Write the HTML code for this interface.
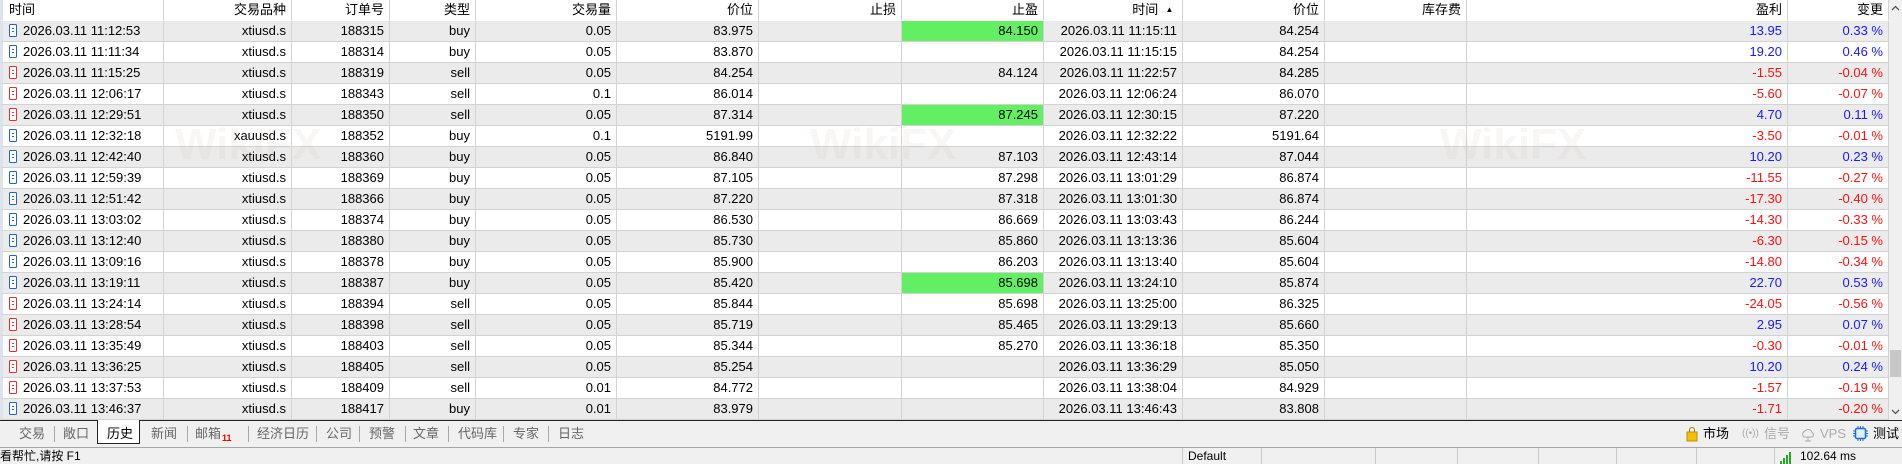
<!DOCTYPE html>
<html><head><meta charset="utf-8">
<style>
*{margin:0;padding:0;box-sizing:border-box}
body{width:1902px;height:464px;overflow:hidden;background:#f0f0f0;font-family:"Liberation Sans","Noto Sans CJK SC",sans-serif;font-size:13px;color:#000;position:relative}
#wrap{position:absolute;left:0;top:0;width:1889px;height:420px;background:#fff;overflow:hidden}
table{border-collapse:separate;border-spacing:0;table-layout:fixed;width:1889px}
td,th{height:20px;line-height:20px;padding:0 5px 0 4px;text-align:right;white-space:nowrap;overflow:hidden;border-right:1px solid #d3d3d3;border-bottom:1px solid #d3d3d3;font-weight:normal}
th{background:#fff;height:20px;border-bottom:1px solid #fff}
th:first-child,td:first-child{text-align:left;padding-left:6px;border-left:3px solid #dde3ea}
tr.g td{background:#ebebeb}
td.gr{background:#62ef62 !important}
.b{color:#1818ff}.r{color:#ff1010}
.ic{display:inline-block;width:8px;height:13px;border:1.3px solid #2266bb;border-radius:1.5px;vertical-align:-2px;margin-right:6px;position:relative;background:#fff}
.ic:before{content:"";position:absolute;left:2px;top:2.5px;width:2px;height:1.3px;background:#2266bb;box-shadow:0 3px 0 #2266bb}
.ic.s{border-color:#e03030}.ic.s:before{background:#e03030;box-shadow:0 3px 0 #e03030}
#sb{position:absolute;left:1889px;top:0;width:13px;height:420px;background:#f0f0f0}
#tabs{position:absolute;left:0;top:420px;width:1902px;height:28px;border-top:1.5px solid #222;border-bottom:1px solid #a5a5a5;background:#f0f0f0}
.t{position:absolute;top:5px;font-size:13px;color:#666;line-height:16px}
.sep{position:absolute;top:5px;width:1px;height:16px;background:#a8a8a8}
#status{position:absolute;left:0;top:448px;width:1902px;height:16px;background:#f0f0f0;font-size:12px;line-height:16px}
.ss{position:absolute;top:0;width:1px;height:16px;background:#c8c8c8}
.wm{position:absolute;font-size:44px;font-weight:bold;color:rgba(200,180,160,0.10);top:120px}
</style></head><body>
<div id="wrap">
<table>
<colgroup><col style="width:164px"><col style="width:128px"><col style="width:98px"><col style="width:86px"><col style="width:141px"><col style="width:142px"><col style="width:143px"><col style="width:142px"><col style="width:139px"><col style="width:142px"><col style="width:142px"><col style="width:321px"><col style="width:101px"></colgroup>
<tr><th>时间</th><th>交易品种</th><th>订单号</th><th>类型</th><th>交易量</th><th>价位</th><th>止损</th><th>止盈</th><th>时间 &nbsp;<span style="font-size:8px;vertical-align:2px">▲</span>&nbsp;</th><th>价位</th><th>库存费</th><th>盈利</th><th>变更</th></tr>
<tr class="g"><td><span class="ic"></span>2026.03.11 11:12:53</td><td>xtiusd.s</td><td>188315</td><td>buy</td><td>0.05</td><td>83.975</td><td></td><td class="gr">84.150</td><td>2026.03.11 11:15:11</td><td>84.254</td><td></td><td class="b">13.95</td><td class="b">0.33 %</td></tr>
<tr><td><span class="ic"></span>2026.03.11 11:11:34</td><td>xtiusd.s</td><td>188314</td><td>buy</td><td>0.05</td><td>83.870</td><td></td><td></td><td>2026.03.11 11:15:15</td><td>84.254</td><td></td><td class="b">19.20</td><td class="b">0.46 %</td></tr>
<tr class="g"><td><span class="ic s"></span>2026.03.11 11:15:25</td><td>xtiusd.s</td><td>188319</td><td>sell</td><td>0.05</td><td>84.254</td><td></td><td>84.124</td><td>2026.03.11 11:22:57</td><td>84.285</td><td></td><td class="r">-1.55</td><td class="r">-0.04 %</td></tr>
<tr><td><span class="ic s"></span>2026.03.11 12:06:17</td><td>xtiusd.s</td><td>188343</td><td>sell</td><td>0.1</td><td>86.014</td><td></td><td></td><td>2026.03.11 12:06:24</td><td>86.070</td><td></td><td class="r">-5.60</td><td class="r">-0.07 %</td></tr>
<tr class="g"><td><span class="ic s"></span>2026.03.11 12:29:51</td><td>xtiusd.s</td><td>188350</td><td>sell</td><td>0.05</td><td>87.314</td><td></td><td class="gr">87.245</td><td>2026.03.11 12:30:15</td><td>87.220</td><td></td><td class="b">4.70</td><td class="b">0.11 %</td></tr>
<tr><td><span class="ic"></span>2026.03.11 12:32:18</td><td>xauusd.s</td><td>188352</td><td>buy</td><td>0.1</td><td>5191.99</td><td></td><td></td><td>2026.03.11 12:32:22</td><td>5191.64</td><td></td><td class="r">-3.50</td><td class="r">-0.01 %</td></tr>
<tr class="g"><td><span class="ic"></span>2026.03.11 12:42:40</td><td>xtiusd.s</td><td>188360</td><td>buy</td><td>0.05</td><td>86.840</td><td></td><td>87.103</td><td>2026.03.11 12:43:14</td><td>87.044</td><td></td><td class="b">10.20</td><td class="b">0.23 %</td></tr>
<tr><td><span class="ic"></span>2026.03.11 12:59:39</td><td>xtiusd.s</td><td>188369</td><td>buy</td><td>0.05</td><td>87.105</td><td></td><td>87.298</td><td>2026.03.11 13:01:29</td><td>86.874</td><td></td><td class="r">-11.55</td><td class="r">-0.27 %</td></tr>
<tr class="g"><td><span class="ic"></span>2026.03.11 12:51:42</td><td>xtiusd.s</td><td>188366</td><td>buy</td><td>0.05</td><td>87.220</td><td></td><td>87.318</td><td>2026.03.11 13:01:30</td><td>86.874</td><td></td><td class="r">-17.30</td><td class="r">-0.40 %</td></tr>
<tr><td><span class="ic"></span>2026.03.11 13:03:02</td><td>xtiusd.s</td><td>188374</td><td>buy</td><td>0.05</td><td>86.530</td><td></td><td>86.669</td><td>2026.03.11 13:03:43</td><td>86.244</td><td></td><td class="r">-14.30</td><td class="r">-0.33 %</td></tr>
<tr class="g"><td><span class="ic"></span>2026.03.11 13:12:40</td><td>xtiusd.s</td><td>188380</td><td>buy</td><td>0.05</td><td>85.730</td><td></td><td>85.860</td><td>2026.03.11 13:13:36</td><td>85.604</td><td></td><td class="r">-6.30</td><td class="r">-0.15 %</td></tr>
<tr><td><span class="ic"></span>2026.03.11 13:09:16</td><td>xtiusd.s</td><td>188378</td><td>buy</td><td>0.05</td><td>85.900</td><td></td><td>86.203</td><td>2026.03.11 13:13:40</td><td>85.604</td><td></td><td class="r">-14.80</td><td class="r">-0.34 %</td></tr>
<tr class="g"><td><span class="ic"></span>2026.03.11 13:19:11</td><td>xtiusd.s</td><td>188387</td><td>buy</td><td>0.05</td><td>85.420</td><td></td><td class="gr">85.698</td><td>2026.03.11 13:24:10</td><td>85.874</td><td></td><td class="b">22.70</td><td class="b">0.53 %</td></tr>
<tr><td><span class="ic s"></span>2026.03.11 13:24:14</td><td>xtiusd.s</td><td>188394</td><td>sell</td><td>0.05</td><td>85.844</td><td></td><td>85.698</td><td>2026.03.11 13:25:00</td><td>86.325</td><td></td><td class="r">-24.05</td><td class="r">-0.56 %</td></tr>
<tr class="g"><td><span class="ic s"></span>2026.03.11 13:28:54</td><td>xtiusd.s</td><td>188398</td><td>sell</td><td>0.05</td><td>85.719</td><td></td><td>85.465</td><td>2026.03.11 13:29:13</td><td>85.660</td><td></td><td class="b">2.95</td><td class="b">0.07 %</td></tr>
<tr><td><span class="ic s"></span>2026.03.11 13:35:49</td><td>xtiusd.s</td><td>188403</td><td>sell</td><td>0.05</td><td>85.344</td><td></td><td>85.270</td><td>2026.03.11 13:36:18</td><td>85.350</td><td></td><td class="r">-0.30</td><td class="r">-0.01 %</td></tr>
<tr class="g"><td><span class="ic s"></span>2026.03.11 13:36:25</td><td>xtiusd.s</td><td>188405</td><td>sell</td><td>0.05</td><td>85.254</td><td></td><td></td><td>2026.03.11 13:36:29</td><td>85.050</td><td></td><td class="b">10.20</td><td class="b">0.24 %</td></tr>
<tr><td><span class="ic s"></span>2026.03.11 13:37:53</td><td>xtiusd.s</td><td>188409</td><td>sell</td><td>0.01</td><td>84.772</td><td></td><td></td><td>2026.03.11 13:38:04</td><td>84.929</td><td></td><td class="r">-1.57</td><td class="r">-0.19 %</td></tr>
<tr class="g"><td><span class="ic"></span>2026.03.11 13:46:37</td><td>xtiusd.s</td><td>188417</td><td>buy</td><td>0.01</td><td>83.979</td><td></td><td></td><td>2026.03.11 13:46:43</td><td>83.808</td><td></td><td class="r">-1.71</td><td class="r">-0.20 %</td></tr>
</table>
<div class="wm" style="left:175px">WikiFX</div>
<div class="wm" style="left:810px">WikiFX</div>
<div class="wm" style="left:1440px">WikiFX</div>
</div>
<div id="sb">
<svg width="13" height="420" style="position:absolute;left:0;top:0"><path d="M3 10 L6.5 6.5 L10 10" stroke="#555" stroke-width="1.3" fill="none"/><rect x="1" y="350" width="11" height="27" fill="#c8c8c8"/><path d="M3 410 L6.5 413.5 L10 410" stroke="#555" stroke-width="1.3" fill="none"/></svg>
</div>
<div id="tabs">
<span class="t" style="left:19px">交易</span><span class="sep" style="left:54px"></span>
<span class="t" style="left:63px">敞口</span>
<div style="position:absolute;left:97px;top:-1px;width:43px;height:24px;background:#fff;border:1px solid #222;border-top:none"></div>
<span class="t" style="left:107px;color:#000">历史</span>
<span class="t" style="left:151px">新闻</span><span class="sep" style="left:187px"></span>
<span class="t" style="left:195px">邮箱</span><span style="position:absolute;left:222px;top:12px;font-size:9px;color:#e00;font-weight:bold">11</span><span class="sep" style="left:248px"></span>
<span class="t" style="left:257px">经济日历</span><span class="sep" style="left:316px"></span>
<span class="t" style="left:326px">公司</span><span class="sep" style="left:359px"></span>
<span class="t" style="left:369px">预警</span><span class="sep" style="left:405px"></span>
<span class="t" style="left:413px">文章</span><span class="sep" style="left:448px"></span>
<span class="t" style="left:458px">代码库</span><span class="sep" style="left:503px"></span>
<span class="t" style="left:513px">专家</span><span class="sep" style="left:548px"></span>
<span class="t" style="left:558px">日志</span>
<svg style="position:absolute;left:1686px;top:6px" width="12" height="15"><path d="M3.5 5 V3 a2.5 2.5 0 0 1 5 0 V5" stroke="#a07000" fill="none"/><rect x="1" y="5" width="10" height="9" fill="#f5c000" stroke="#c09000"/></svg>
<span class="t" style="left:1703px;color:#000">市场</span>
<span class="t" style="left:1742px;color:#aaa;font-size:10px">((•))</span>
<span class="t" style="left:1764px;color:#aaa">信号</span>
<svg style="position:absolute;left:1800px;top:6px" width="16" height="15"><path d="M4 10 a3.5 3.5 0 0 1 1-6 a4 4 0 0 1 7 1.5 a2.5 2.5 0 0 1 0 4.5 Z M8 10 V14 M5 14 H11" stroke="#aaa" fill="none"/></svg>
<span class="t" style="left:1820px;color:#aaa">VPS</span>
<svg style="position:absolute;left:1853px;top:5px" width="15" height="15"><rect x="2.5" y="2.5" width="10" height="10" rx="1.5" fill="#dff0ff" stroke="#1a6fd0" stroke-width="1.5"/><path d="M5 0v2.5M7.5 0v2.5M10 0v2.5M5 12.5v2.5M7.5 12.5v2.5M10 12.5v2.5M0 5h2.5M0 7.5h2.5M0 10h2.5M12.5 5h2.5M12.5 7.5h2.5M12.5 10h2.5" stroke="#1a6fd0"/></svg>
<span class="t" style="left:1873px;color:#000">测试</span>
</div>
<div id="status">
<span style="position:absolute;left:0;top:0">看帮忙,请按 F1</span>
<span class="ss" style="left:1182px"></span><span style="position:absolute;left:1188px">Default</span>
<span class="ss" style="left:1261px"></span><span class="ss" style="left:1375px"></span><span class="ss" style="left:1457px"></span><span class="ss" style="left:1538px"></span><span class="ss" style="left:1616px"></span><span class="ss" style="left:1696px"></span><span class="ss" style="left:1774px"></span>
<svg style="position:absolute;left:1780px;top:3px" width="14" height="13"><rect x="0" y="10" width="2" height="3" fill="#2a2"/><rect x="3" y="7" width="2" height="6" fill="#2a2"/><rect x="6" y="4" width="2" height="9" fill="#2a2"/><rect x="9" y="1" width="2" height="12" fill="#2a2"/></svg>
<span style="position:absolute;left:1800px">102.64 ms</span>
</div>
</body></html>
